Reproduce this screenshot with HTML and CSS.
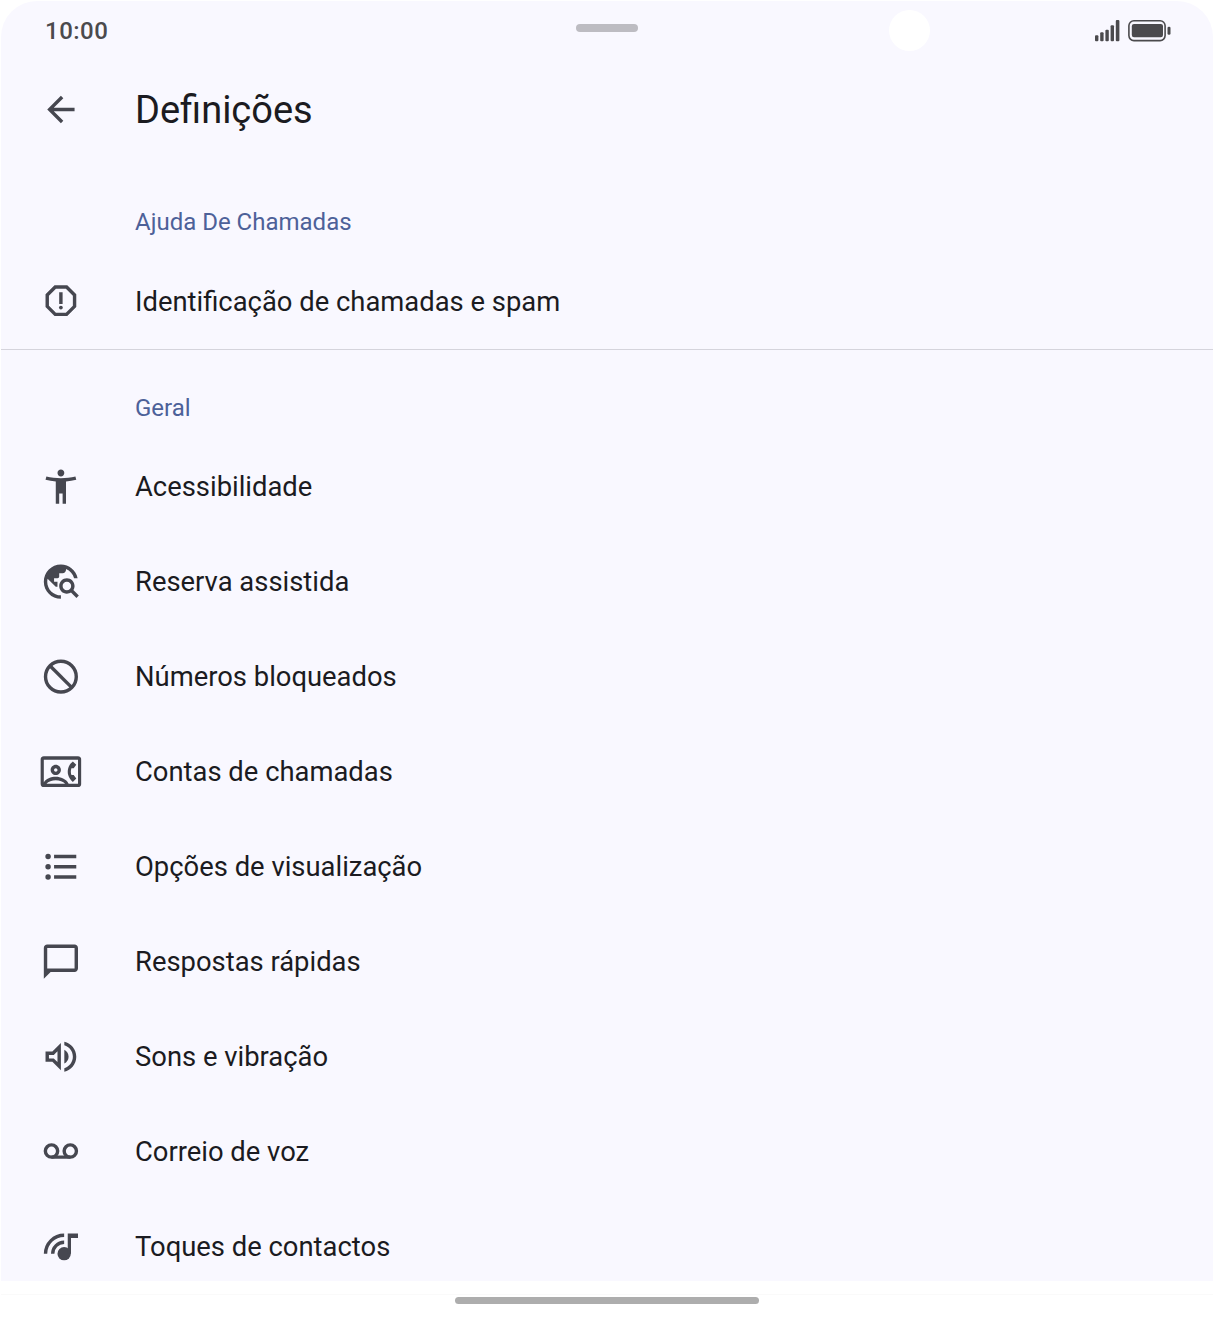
FILE: index.html
```html
<!DOCTYPE html>
<html lang="pt">
<head>
  <meta charset="UTF-8">
  <meta name="viewport" content="width=device-width, initial-scale=1.0">
  <title>Definições</title>
  <link rel="stylesheet" href="styles.css">
</head>
<body>
  <div class="device">
    <div class="screen">
      <div class="status-bar">
        <span class="time">10:00</span>
        <div class="status-icons">
          <svg class="signal" viewBox="0 0 25 22">
            <rect x="0" y="15.3" width="3.4" height="6" rx="1"/>
            <rect x="5.2" y="12.3" width="3.4" height="9" rx="1"/>
            <rect x="10.4" y="9.8" width="3.4" height="11.5" rx="1"/>
            <rect x="15.6" y="5.3" width="3.4" height="16" rx="1"/>
            <rect x="20.8" y="0" width="3.6" height="21.3" rx="1"/>
          </svg>
          <svg class="battery" viewBox="0 0 43 22">
            <rect x=".9" y=".8" width="36.2" height="19.8" rx="5" fill="none" stroke="#4b4a4d" stroke-width="1.6"/>
            <rect x="3.8" y="3.9" width="31.2" height="13.4" rx="2.2"/>
            <rect x="39.5" y="6.7" width="3" height="8" rx="1.3"/>
          </svg>
        </div>
        <div class="handle"></div>
        <div class="camera"></div>
      </div>

      <header class="app-bar">
        <svg class="icon" viewBox="0 0 24 24"><path d="M20 11H7.83l5.59-5.59L12 4l-8 8 8 8 1.41-1.41L7.83 13H20v-2z"/></svg>
        <h1>Definições</h1>
      </header>

      <section class="first">
        <h2>Ajuda De Chamadas</h2>
        <div class="row">
          <svg class="icon" viewBox="0 0 24 24"><path d="M15.73 3H8.27L3 8.27v7.46L8.27 21h7.46L21 15.73V8.27L15.73 3zM19 14.9L14.9 19H9.1L5 14.9V9.1L9.1 5h5.8L19 9.1v5.8z"/><circle cx="12" cy="16" r="1.1"/><path d="M11 7h2v7h-2z"/></svg>
          <span>Identificação de chamadas e spam</span>
        </div>
      </section>

      <section class="general">
        <h2>Geral</h2>
        <div class="row">
          <svg class="icon" viewBox="0 0 24 24"><path d="M20.5 6c-2.61.7-5.67 1-8.5 1s-5.89-.3-8.5-1L3 8c1.86.5 4 .83 6 1v13h2v-6h2v6h2V9c2-.17 4.14-.5 6-1l-.5-2zM12 6c1.1 0 2-.9 2-2s-.9-2-2-2-2 .9-2 2 .9 2 2 2z"/></svg>
          <span>Acessibilidade</span>
        </div>
        <div class="row">
          <svg class="icon" viewBox="0 0 24 24"><path d="M19.3 16.9c.4-.7.7-1.5.7-2.4 0-2.5-2-4.5-4.5-4.5S11 12 11 14.5s2 4.5 4.5 4.5c.9 0 1.7-.3 2.4-.7l3.2 3.2 1.4-1.4-3.2-3.2zm-3.8.1c-1.4 0-2.5-1.1-2.5-2.5s1.1-2.5 2.5-2.5 2.5 1.1 2.5 2.5-1.1 2.5-2.5 2.5zM12 20v2C6.48 22 2 17.52 2 12S6.48 2 12 2c4.84 0 8.87 3.44 9.8 8h-2.07c-.64-2.46-2.4-4.47-4.73-5.41V5c0 1.1-.9 2-2 2h-2v2c0 .55-.45 1-1 1H8v2h2v3H9l-4.79-4.79C4.08 10.79 4 11.38 4 12c0 4.41 3.59 8 8 8z"/></svg>
          <span>Reserva assistida</span>
        </div>
        <div class="row">
          <svg class="icon line" viewBox="0 0 24 24"><circle cx="12" cy="12" r="9"/><path d="M5.6 5.6l12.8 12.8"/></svg>
          <span>Números bloqueados</span>
        </div>
        <div class="row">
          <svg class="icon" viewBox="0 0 24 24"><path d="M22 3H2C.9 3 0 3.9 0 5v14c0 1.1.9 2 2 2h20c1.1 0 2-.9 2-2V5c0-1.1-.9-2-2-2zM3.54 19C4.64 17.78 6.85 17 9 17s4.37.78 5.46 2H3.54zM22 19h-5.45C15.19 16.28 11.78 15 9 15s-5.9 1.1-7 3.3V5h20v14z"/><path d="M9 14c1.65 0 3-1.35 3-3s-1.35-3-3-3-3 1.35-3 3 1.35 3 3 3zm0-4c.54 0 1 .46 1 1s-.46 1-1 1-1-.46-1-1 .46-1 1-1zM18.17 14c-.22-.63-.35-1.3-.35-2s.13-1.37.34-2h1.33L21 8l-1.99-1.99c-1.31.98-2.28 2.37-2.73 3.99-.18.64-.28 1.31-.28 2s.1 1.36.28 2c.45 1.61 1.42 3.01 2.73 3.99L21 16l-1.51-2h-1.32z"/></svg>
          <span>Contas de chamadas</span>
        </div>
        <div class="row">
          <svg class="icon" viewBox="0 0 24 24"><circle cx="4.5" cy="6" r="1.6"/><circle cx="4.5" cy="12" r="1.6"/><circle cx="4.5" cy="18" r="1.6"/><path d="M8 5h13v2H8zM8 11h13v2H8zM8 17h13v2H8z"/></svg>
          <span>Opções de visualização</span>
        </div>
        <div class="row">
          <svg class="icon" viewBox="0 0 24 24"><path d="M20 2H4c-1.1 0-2 .9-2 2v18l4-4h14c1.1 0 2-.9 2-2V4c0-1.1-.9-2-2-2zm0 14H4V4h16v12z"/></svg>
          <span>Respostas rápidas</span>
        </div>
        <div class="row">
          <svg class="icon" viewBox="0 0 24 24"><path d="M3 9v6h4l5 5V4L7 9H3zm7-.17v6.34L7.83 13H5v-2h2.83L10 8.83zM16.5 12c0-1.77-1.02-3.29-2.5-4.03v8.05c1.48-.73 2.5-2.25 2.5-4.02zM14 3.23v2.06c2.89.86 5 3.54 5 6.71s-2.11 5.85-5 6.71v2.06c4.01-.91 7-4.49 7-8.77s-2.99-7.86-7-8.77z"/></svg>
          <span>Sons e vibração</span>
        </div>
        <div class="row">
          <svg class="icon line" viewBox="0 0 24 24"><circle cx="6.5" cy="11.6" r="3.6"/><circle cx="17.5" cy="11.6" r="3.6"/><path d="M6.5 15.2h11"/></svg>
          <span>Correio de voz</span>
        </div>
        <div class="row">
          <svg class="icon" viewBox="0 0 24 24"><circle cx="13.9" cy="16.1" r="3.9"/><path d="M16 4.3h6v2.6h-4.1v9.2H16z"/><path class="arc" d="M3 16.1A10.9 10.9 0 0 1 13.9 5.3M7.2 16.1A6.7 6.7 0 0 1 13.9 9.4"/></svg>
          <span>Toques de contactos</span>
        </div>
      </section>
    </div>
    <div class="nav-bar"><div class="nav-pill"></div></div>
  </div>
</body>
</html>
```
FILE: styles.css
```css
* {
  box-sizing: border-box;
}

body {
  margin: 0;
  background: #fff;
  color: #1b1b21;
  font-family: Roboto, sans-serif;
}

.device {
  width: 1214px;
  height: 1319px;
  padding: 1px;
  overflow: hidden;
}

.screen {
  height: 1280px;
  overflow: hidden;
  background: #f9f8ff;
  border-radius: 36px 36px 0 0;
}

.status-bar {
  position: relative;
  display: flex;
  justify-content: space-between;
  align-items: center;
  height: 60px;
  padding: 0 42px 0 44px;
}

.time {
  color: #4b4a4d;
  font-size: 24px;
  font-weight: 500;
  letter-spacing: 0.5px;
}

.status-icons {
  display: flex;
  gap: 8px;
  fill: #4b4a4d;
}

.signal {
  width: 25px;
  height: 22px;
}

.battery {
  width: 43px;
  height: 22px;
}

.handle {
  position: absolute;
  top: 23px;
  left: 575px;
  width: 62px;
  height: 8px;
  border-radius: 4px;
  background: #bdbcc2;
}

.camera {
  position: absolute;
  top: 9px;
  left: 888px;
  width: 41px;
  height: 41px;
  border-radius: 50%;
  background: #fff;
}

.app-bar,
.row {
  display: flex;
  align-items: center;
  padding-left: 39px;
}

.app-bar {
  height: 97px;
}

.icon {
  flex: none;
  width: 41px;
  height: 41px;
  margin-right: 54px;
  fill: #464750;
  transform: translateX(0.4px);
}

.row .icon {
  transform: translate(0.4px, -0.8px);
}

.line,
.arc {
  fill: none;
  stroke: #464750;
  stroke-width: 2;
}

h1 {
  margin: 0;
  font-size: 38px;
  font-weight: 400;
}

h2 {
  height: 64px;
  margin: 0;
  padding-left: 134px;
  color: #4d6199;
  font-size: 24px;
  font-weight: 400;
  line-height: 65px;
}

.row {
  height: 95px;
  font-size: 27.4px;
}

.first {
  padding-top: 32px;
  border-bottom: 1px solid #d5d4dc;
}

.general {
  padding-top: 25.5px;
}

.nav-bar {
  display: flex;
  justify-content: center;
  height: 38px;
  padding-top: 16px;
  background: linear-gradient(#fff 13px, #fafafa 13px, #fafafa 14px, #fff 14px);
}

.nav-pill {
  width: 304px;
  height: 7px;
  border-radius: 4px;
  background: #adadad;
}
```
